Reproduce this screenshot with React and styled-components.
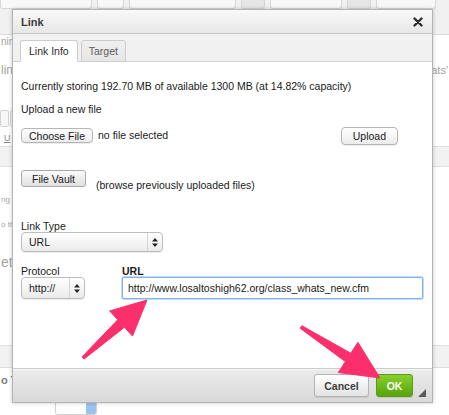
import styled, { createGlobalStyle } from 'styled-components';

const GlobalStyle = createGlobalStyle`
  html, body {
    margin: 0;
    padding: 0;
  }
  body {
    background: #fff;
    font-family: "Liberation Sans", Arial, sans-serif;
  }
`;

const Screen = styled.div`
  position: relative;
  width: 449px;
  height: 415px;
  overflow: hidden;
  background: #fff;
`;

/* ---------- faded editor page behind the dialog ---------- */

const Page = styled.div`
  display: flex;
  flex-direction: column;
  height: 100%;
  color: #a3a3a3;
`;

const TopBar = styled.div`
  box-sizing: border-box;
  height: 36px;
  display: flex;
  align-items: flex-start;
  gap: 5px;
  background: #f1f1f1;
  border-bottom: 1px solid #dadada;
`;

const ToolGroup = styled.div`
  box-sizing: border-box;
  width: ${(p) => p.$w}px;
  height: 9px;
  background: ${(p) => (p.$dim ? '#e6e6e6' : '#f8f8f8')};
  border: 1px solid #d6d6d6;
  border-top: none;
  border-radius: 0 0 3px 3px;
`;

const Fragment = styled.div`
  margin-top: ${(p) => p.$mt}px;
  font-size: ${(p) => p.$size}px;
  line-height: ${(p) => p.$size + 2}px;
  font-weight: ${(p) => (p.$bold ? 700 : 400)};
  color: ${(p) => p.$color || '#a3a3a3'};
  white-space: nowrap;
  padding-left: 1px;
`;

const SplitLine = styled(Fragment)`
  display: flex;
  justify-content: space-between;
  align-items: baseline;
  padding-right: 1px;
`;

const TailWord = styled.span`
  font-size: 11px;
`;

const MiniTools = styled.div`
  margin-top: 33px;
  display: flex;
  gap: 1px;
`;

const MiniTool = styled.div`
  box-sizing: border-box;
  width: 9px;
  height: 17px;
  border: 1px solid #d3d3d3;
  background: #f7f7f7;
  border-radius: 2px;
`;

const Underlined = styled(Fragment)`
  text-decoration: underline;
  padding-left: 4px;
`;

const GreyBand = styled.div`
  box-sizing: border-box;
  margin-top: ${(p) => p.$mt}px;
  height: ${(p) => p.$h}px;
  background: #f2f2f2;
  border-top: 1px solid #dedede;
  border-bottom: 1px solid #dedede;
`;

const MiniSelect = styled.div`
  box-sizing: border-box;
  margin: 14px 0 0 55px;
  width: 42px;
  height: 14px;
  display: flex;
  border: 1px solid #cfcfcf;
  border-radius: 3px;
  overflow: hidden;
  background: #fff;
`;

const MiniSelectKnob = styled.div`
  margin-left: auto;
  width: 10px;
  background: #9cc3ee;
`;

/* ---------- dialog ---------- */

const Dialog = styled.div`
  position: absolute;
  left: 12px;
  top: 9px;
  box-sizing: border-box;
  width: 421px;
  height: 394px;
  display: flex;
  flex-direction: column;
  background: #fff;
  border: 1px solid #b4b4b4;
  box-shadow: 0 0 4px rgba(0, 0, 0, 0.22);
  font-family: "Liberation Sans", Arial, sans-serif;
  color: #1a1a1a;
`;

const TitleBar = styled.div`
  box-sizing: border-box;
  height: 24px;
  flex-shrink: 0;
  display: flex;
  align-items: center;
  justify-content: space-between;
  padding: 0 9px 0 8px;
  background: linear-gradient(#f9f9f9, #e7e7e7);
  border-bottom: 1px solid #c6c6c6;
`;

const Title = styled.span`
  font-size: 11px;
  font-weight: 700;
  color: #3c3c3c;
`;

const TabStrip = styled.div`
  box-sizing: border-box;
  height: 28px;
  flex-shrink: 0;
  display: flex;
  align-items: flex-end;
  gap: 3px;
  padding: 5px 0 0 7px;
  background: #f1f1f1;
  border-bottom: 1px solid #d0d0d0;
`;

const Tab = styled.div`
  box-sizing: border-box;
  height: 22px;
  margin-bottom: -1px;
  display: flex;
  align-items: center;
  padding: 0 ${(p) => (p.$active ? 8 : 7)}px;
  font-size: 10.5px;
  color: ${(p) => (p.$active ? '#2c2c2c' : '#5c5c5c')};
  background: ${(p) => (p.$active ? '#fff' : 'linear-gradient(#f0f0f0, #e6e6e6)')};
  border: 1px solid #cdcdcd;
  border-bottom-color: ${(p) => (p.$active ? '#fff' : '#cdcdcd')};
  border-radius: 3px 3px 0 0;
`;

const Body = styled.div`
  flex: 1;
  display: flex;
  flex-direction: column;
  align-items: flex-start;
  padding: 18px 0 0 8px;
  font-size: 10.5px;
  line-height: 13px;
`;

const Text = styled.div`
  margin-top: ${(p) => p.$mt || 0}px;
  white-space: nowrap;
`;

const ChooseRow = styled.div`
  margin-top: 10px;
  width: 377px;
  height: 19px;
  display: flex;
  align-items: center;
  justify-content: space-between;
`;

const FileGroup = styled.div`
  display: flex;
  align-items: center;
  gap: 5px;
`;

const MacButton = styled.button`
  box-sizing: border-box;
  height: ${(p) => p.$h}px;
  padding: 0 ${(p) => p.$px}px;
  font-family: inherit;
  font-size: 10.5px;
  color: #1a1a1a;
  background: linear-gradient(#ffffff, #ececec);
  border: 1px solid #b5b5b5;
  border-radius: 4px;
  box-shadow: 0 1px 1px rgba(0, 0, 0, 0.08);
`;

const VaultRow = styled.div`
  margin-top: 25px;
  display: flex;
  align-items: flex-start;
  gap: 10px;
`;

const VaultButton = styled.button`
  box-sizing: border-box;
  width: 65px;
  height: 17px;
  padding: 0;
  font-family: inherit;
  font-size: 10.5px;
  color: #1a1a1a;
  background: linear-gradient(#fbfbfb, #e1e1e1);
  border: 1px solid #a9a9a9;
  border-radius: 3px;
`;

const VaultNote = styled.span`
  margin-top: 9px;
  white-space: nowrap;
`;

const Label = styled.div`
  margin-top: ${(p) => p.$mt || 0}px;
  line-height: 12px;
  font-weight: ${(p) => (p.$bold ? 700 : 400)};
`;

const SelectBox = styled.div`
  box-sizing: border-box;
  width: ${(p) => p.$w}px;
  height: ${(p) => p.$h}px;
  display: flex;
  align-items: stretch;
  background: linear-gradient(#ffffff, #ebebeb);
  border: 1px solid #bdbdbd;
  border-radius: 4px;
  box-shadow: 0 1px 1px rgba(0, 0, 0, 0.08);
`;

const SelectValue = styled.span`
  flex: 1;
  display: flex;
  align-items: center;
  padding-left: 7px;
`;

const SelectArrows = styled.span`
  width: 14px;
  display: flex;
  align-items: center;
  justify-content: center;
  border-left: 1px solid #d4d4d4;
`;

const FieldGrid = styled.div`
  margin-top: 13px;
  display: grid;
  grid-template-columns: 64px 301px;
  column-gap: 37px;
`;

const UrlInput = styled.div`
  box-sizing: border-box;
  width: 301px;
  height: 22px;
  display: flex;
  align-items: center;
  padding-left: 5px;
  background: #fff;
  border: 1px solid #7db2e6;
  border-radius: 2px;
  box-shadow: 0 0 0 1px #c4ddf5;
  white-space: nowrap;
`;

const Footer = styled.div`
  box-sizing: border-box;
  height: 34px;
  flex-shrink: 0;
  display: flex;
  align-items: flex-start;
  justify-content: flex-end;
  padding: 5px 6px 0 0;
  background: linear-gradient(#ebebeb, #d9d9d9);
  border-top: 1px solid #cbcbcb;
  box-shadow: inset 0 1px 0 #f8f8f8;
`;

const FooterButton = styled.button`
  box-sizing: border-box;
  width: ${(p) => p.$w}px;
  height: 23px;
  margin-right: ${(p) => p.$mr}px;
  padding: 0;
  font-family: inherit;
  font-size: 10.5px;
  font-weight: 700;
  color: ${(p) => (p.$primary ? '#fff' : '#404040')};
  background: ${(p) =>
    p.$primary ? 'linear-gradient(#88d12c, #56a30c)' : 'linear-gradient(#ffffff, #e3e3e3)'};
  border: 1px solid ${(p) => (p.$primary ? '#5c9b17' : '#b4b4b4')};
  border-radius: 3px;
  box-shadow: 0 1px 1px rgba(0, 0, 0, 0.1);
`;

const Grip = styled.svg`
  align-self: flex-end;
  margin-bottom: 5px;
`;

const Annotations = styled.svg`
  position: absolute;
  left: 0;
  top: 0;
  pointer-events: none;
`;

const UpDown = () => (
  <svg width="6" height="9" viewBox="0 0 6 9">
    <path d="M3 0 L6 3.4 H0 Z M3 9 L6 5.6 H0 Z" fill="#222" />
  </svg>
);

const App = () => (
  <Screen>
    <GlobalStyle />
    <Page>
      <TopBar>
        <ToolGroup $w={92} />
        <ToolGroup $w={27} />
        <ToolGroup $w={107} />
        <ToolGroup $w={24} $dim />
        <ToolGroup $w={72} />
        <ToolGroup $w={24} $dim />
        <ToolGroup $w={60} />
      </TopBar>
      <Fragment $mt={1} $size={10}>ning text</Fragment>
      <SplitLine $mt={15} $size={12}>
        <span>link</span>
        <TailWord>whats'</TailWord>
      </SplitLine>
      <MiniTools>
        <MiniTool />
        <MiniTool />
      </MiniTools>
      <Underlined $mt={6} $size={9} $color="#8a8a8a">U</Underlined>
      <GreyBand $mt={2} $h={22} />
      <Fragment $mt={28} $size={8}>ng a</Fragment>
      <Fragment $mt={15} $size={8}>o th</Fragment>
      <Fragment $mt={24} $size={14}>et</Fragment>
      <GreyBand $mt={75} $h={24} />
      <Fragment $mt={6} $size={11} $bold $color="#7a7a7a">o T</Fragment>
      <MiniSelect>
        <MiniSelectKnob />
      </MiniSelect>
    </Page>

    <Dialog>
      <TitleBar>
        <Title>Link</Title>
        <svg width="10" height="10" viewBox="0 0 10 10">
          <path d="M1.5 1.5 L8.5 8.5 M8.5 1.5 L1.5 8.5" stroke="#2f2f2f" strokeWidth="2.4" strokeLinecap="round" />
        </svg>
      </TitleBar>
      <TabStrip>
        <Tab $active>Link Info</Tab>
        <Tab>Target</Tab>
      </TabStrip>
      <Body>
        <Text>Currently storing 192.70 MB of available 1300 MB (at 14.82% capacity)</Text>
        <Text $mt={10}>Upload a new file</Text>
        <ChooseRow>
          <FileGroup>
            <MacButton $h={15} $px={7}>Choose File</MacButton>
            <span>no file selected</span>
          </FileGroup>
          <MacButton $h={18} $px={11}>Upload</MacButton>
        </ChooseRow>
        <VaultRow>
          <VaultButton>File Vault</VaultButton>
          <VaultNote>(browse previously uploaded files)</VaultNote>
        </VaultRow>
        <Label $mt={28}>Link Type</Label>
        <SelectBox $w={142} $h={20}>
          <SelectValue>URL</SelectValue>
          <SelectArrows><UpDown /></SelectArrows>
        </SelectBox>
        <FieldGrid>
          <Label>Protocol</Label>
          <Label $bold>URL</Label>
          <SelectBox $w={64} $h={22}>
            <SelectValue>http://</SelectValue>
            <SelectArrows><UpDown /></SelectArrows>
          </SelectBox>
          <UrlInput>http://www.losaltoshigh62.org/class_whats_new.cfm</UrlInput>
        </FieldGrid>
      </Body>
      <Footer>
        <FooterButton $w={55} $mr={7}>Cancel</FooterButton>
        <FooterButton $w={37} $mr={5} $primary>OK</FooterButton>
        <Grip width="8" height="8" viewBox="0 0 8 8">
          <path d="M8 0 V8 H0 Z" fill="#5a5a5a" />
        </Grip>
      </Footer>
    </Dialog>

    <Annotations width="449" height="415" viewBox="0 0 449 415">
      <path
        d="M82 356.9 L117.7 319.8 L109.7 310.9 L147 300 L132.5 336.1 L124.5 327.2 L84 359.1 Z"
        fill="#fb2f6c"
        stroke="#fb2f6c"
        strokeWidth="1"
        strokeLinejoin="round"
      />
      <path
        d="M300.2 328.3 L345.4 361.6 L338.3 372.5 L380 378 L357.9 342.3 L350.8 353.2 L301.8 325.7 Z"
        fill="#fb2f6c"
        stroke="#fb2f6c"
        strokeWidth="1"
        strokeLinejoin="round"
      />
    </Annotations>
  </Screen>
);

export default App;
